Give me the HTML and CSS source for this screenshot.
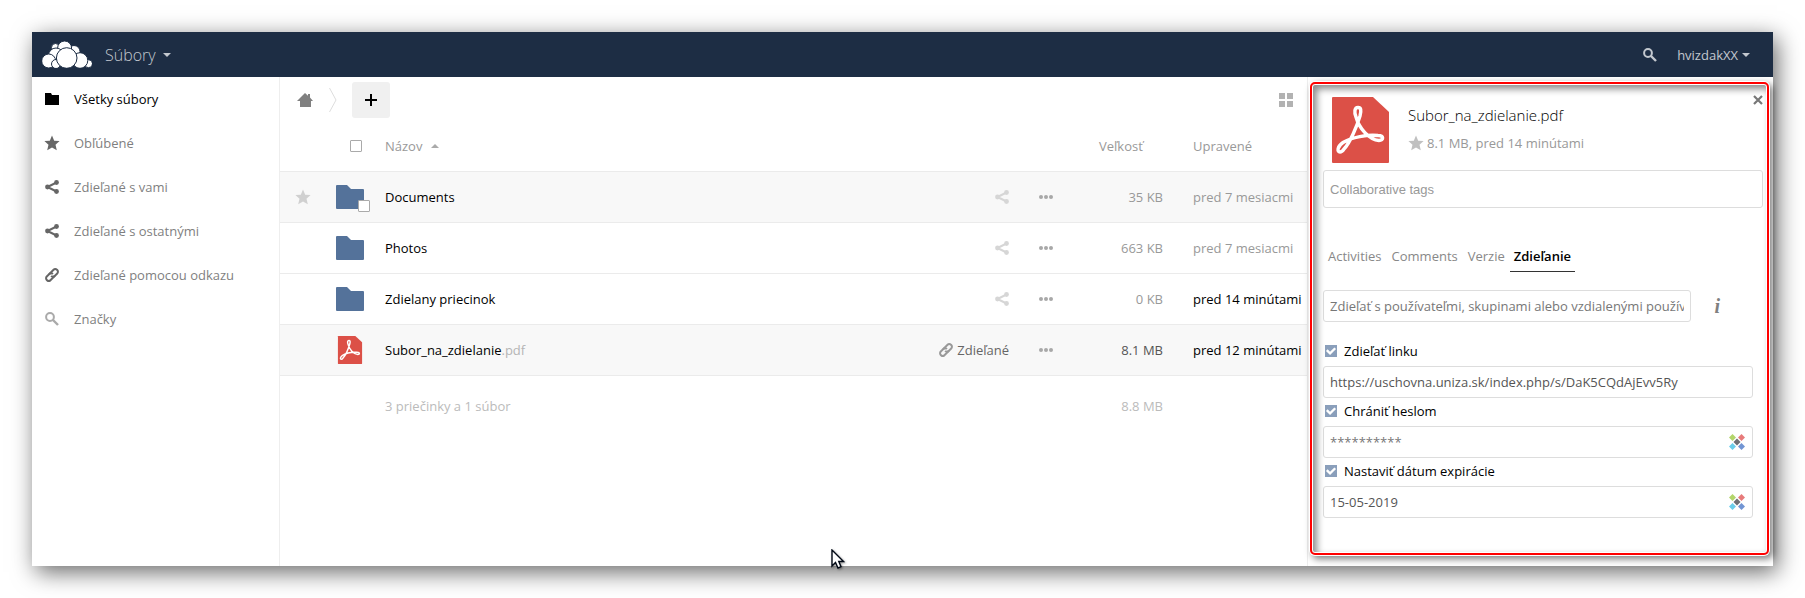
FILE: index.html
```
<!DOCTYPE html>
<html lang="sk">
<head>
  <meta charset="UTF-8" />
  <meta name="viewport" content="width=device-width, initial-scale=1.0" />
  <title>Súbory</title>
  <link rel="stylesheet" href="styles.css">
</head>
<body>
  <svg class="sprite" aria-hidden="true">
    <symbol id="i-folder" viewBox="0 0 14 12"><path d="M0 0h6l1 2h7v10H0z"/></symbol>
    <symbol id="i-star" viewBox="0 0 16 16"><path d="M8 .5l2.2 5.2 5.4.4-4.1 3.6 1.3 5.6L8 12.4l-4.8 2.9 1.3-5.6L.4 6.1l5.4-.4z"/></symbol>
    <symbol id="i-share" viewBox="0 0 14 14"><path d="M2.5 7l9-4.5M2.5 7l9 4.5" stroke="currentColor" stroke-width="2"/><circle cx="2.5" cy="7" r="2.4"/><circle cx="11.5" cy="2.5" r="2.4"/><circle cx="11.5" cy="11.5" r="2.4"/></symbol>
    <symbol id="i-link" viewBox="0 0 14 14"><g fill="none" stroke="currentColor" stroke-width="2" transform="rotate(-45 7 7)"><path d="M8.5 9.6H2.2a2.4 2.4 0 0 1-2.4-2.4v-.4a2.4 2.4 0 0 1 2.4-2.4h3.6a2.4 2.4 0 0 1 2.4 2.6"/><path d="M5.5 4.4h6.3a2.4 2.4 0 0 1 2.4 2.4v.4a2.4 2.4 0 0 1-2.4 2.4H8.2a2.4 2.4 0 0 1-2.4-2.6"/></g></symbol>
    <symbol id="i-search" viewBox="0 0 14 14"><circle cx="5" cy="5" r="3.9" fill="none" stroke="currentColor" stroke-width="2"/><path d="M8 8l5 5" stroke="currentColor" stroke-width="2.4"/></symbol>
    <symbol id="i-more" viewBox="0 0 14 4"><circle cx="2" cy="2" r="2"/><circle cx="7" cy="2" r="2"/><circle cx="12" cy="2" r="2"/></symbol>
    <symbol id="i-dir" viewBox="0 0 28 24"><path d="M1 0h10l4 4h12a1 1 0 0 1 1 1v18a1 1 0 0 1-1 1H1a1 1 0 0 1-1-1V1a1 1 0 0 1 1-1z"/></symbol>
    <symbol id="i-pdf" viewBox="0 0 57 66"><path d="M1 0h40l16 15v50a1 1 0 0 1-1 1H1a1 1 0 0 1-1-1V1a1 1 0 0 1 1-1z" fill="#dc5047"/><path d="M12 52C18 46 25 29 28 19C29.500 13 29 10.500 26 10.500C22.500 10.500 22 15 24 20C27 31 37 43 47 43.500C52 43.500 52 38.500 46 38.500C35 37.500 20 40 11 45.500C5 49.500 5 55 8 55C9.500 55 11 53.500 12 52Z" fill="none" stroke="#fff" stroke-width="3.400"/></symbol>
    <symbol id="i-xmenu" viewBox="0 0 16 16"><path fill="#b3d56b" d="M3.500 0L7 3.500 3.500 7 0 3.500z"/><path fill="#e77b7b" d="M12.500 0L16 3.500 12.500 7 9 3.500z"/><path fill="#6ccdea" d="M3.500 9L7 12.500 3.500 16 0 12.500z"/><path fill="#7295d3" d="M12.500 9l3.500 3.500-3.500 3.500L9 12.500z"/><path fill="#6e6e73" d="M8 4.500L11.500 8 8 11.500 4.500 8z"/></symbol>
  </svg>

  <div class="window">
    <header class="header">
      <a href="#" class="logo" aria-label="ownCloud">
        <svg width="50" height="27" viewBox="0 0 50 27" stroke="#1d2d44" stroke-width="1">
          <circle cx="13.500" cy="6.500" r="4"/><circle cx="32" cy="10.500" r="6"/><circle cx="22.600" cy="7" r="7"/>
          <circle cx="46.500" cy="22.700" r="4"/><circle cx="38" cy="19.500" r="7.800"/><circle cx="14" cy="14.500" r="7.500"/>
          <circle cx="6.700" cy="20" r="7"/><circle cx="14" cy="23" r="4.500"/><circle cx="24.700" cy="17" r="10.300"/>
        </svg>
      </a>
      <button class="app-menu">Súbory <span class="caret"></span></button>
      <button class="search" aria-label="Hľadať"><svg width="14" height="14"><use href="#i-search"/></svg></button>
      <button class="user-menu">hvizdakXX <span class="caret"></span></button>
    </header>

    <div class="content">
      <nav class="nav">
        <a href="#" class="active"><svg width="14" height="12"><use href="#i-folder"/></svg>Všetky súbory</a>
        <a href="#"><svg width="16" height="16"><use href="#i-star"/></svg>Obľúbené</a>
        <a href="#"><svg width="14" height="14"><use href="#i-share"/></svg>Zdieľané s vami</a>
        <a href="#"><svg width="14" height="14"><use href="#i-share"/></svg>Zdieľané s ostatnými</a>
        <a href="#"><svg width="14" height="14"><use href="#i-link"/></svg>Zdieľané pomocou odkazu</a>
        <a href="#"><svg class="pale" width="14" height="14"><use href="#i-search"/></svg>Značky</a>
      </nav>

      <main class="files">
        <div class="toolbar">
          <a href="#" class="home" aria-label="Domov"><svg width="16" height="14" viewBox="0 0 16 14"><path d="M8 0l3 2.700V1h2v3.500L16 8h-2v6H3V8H0z"/></svg></a>
          <svg class="crumb" width="8" height="24" viewBox="0 0 8 24"><path d="M.5 0l6.500 12-6.500 12" fill="none" stroke="#ddd"/></svg>
          <button class="new" aria-label="Nový"><svg width="12" height="12" viewBox="0 0 12 12"><path d="M5 0h2v5h5v2H7v5H5V7H0V5h5z"/></svg></button>
          <button class="grid-view" aria-label="Mriežka"><svg width="14" height="14" viewBox="0 0 14 14"><path d="M0 0h6v6H0zM8 0h6v6H8zM0 8h6v6H0zM8 8h6v6H8z"/></svg></button>
        </div>

        <table class="list">
          <thead>
            <tr>
              <th class="fav"></th>
              <th class="thumb"><input type="checkbox" class="check" aria-label="Vybrať všetko"></th>
              <th class="name"><button class="sort">Názov <span class="caret up"></span></button></th>
              <th class="size"><button class="sort">Veľkosť</button></th>
              <th class="date"><button class="sort">Upravené</button></th>
            </tr>
          </thead>
          <tbody>
            <tr class="hover">
              <td class="fav"><svg width="16" height="16"><use href="#i-star"/></svg></td>
              <td class="thumb"><span class="dir"><svg width="28" height="24"><use href="#i-dir"/></svg><input type="checkbox" class="check over" aria-label="Vybrať Documents"></span></td>
              <td class="name"><div class="row"><a href="#">Documents</a><button class="share" aria-label="Zdieľať"><svg width="14" height="14"><use href="#i-share"/></svg></button><button class="more" aria-label="Viac"><svg width="14" height="4"><use href="#i-more"/></svg></button></div></td>
              <td class="size">35 KB</td>
              <td class="date">pred 7 mesiacmi</td>
            </tr>
            <tr>
              <td class="fav"></td>
              <td class="thumb"><span class="dir"><svg width="28" height="24"><use href="#i-dir"/></svg></span></td>
              <td class="name"><div class="row"><a href="#">Photos</a><button class="share" aria-label="Zdieľať"><svg width="14" height="14"><use href="#i-share"/></svg></button><button class="more" aria-label="Viac"><svg width="14" height="4"><use href="#i-more"/></svg></button></div></td>
              <td class="size">663 KB</td>
              <td class="date">pred 7 mesiacmi</td>
            </tr>
            <tr>
              <td class="fav"></td>
              <td class="thumb"><span class="dir"><svg width="28" height="24"><use href="#i-dir"/></svg></span></td>
              <td class="name"><div class="row"><a href="#">Zdielany priecinok</a><button class="share" aria-label="Zdieľať"><svg width="14" height="14"><use href="#i-share"/></svg></button><button class="more" aria-label="Viac"><svg width="14" height="4"><use href="#i-more"/></svg></button></div></td>
              <td class="size">0 KB</td>
              <td class="date recent">pred 14 minútami</td>
            </tr>
            <tr class="hover">
              <td class="fav"></td>
              <td class="thumb"><span class="dir"><svg width="28" height="28"><use href="#i-pdf"/></svg></span></td>
              <td class="name"><div class="row"><a href="#">Subor_na_zdielanie<span class="ext">.pdf</span></a><button class="share shared"><svg width="14" height="14"><use href="#i-link"/></svg>Zdieľané</button><button class="more" aria-label="Viac"><svg width="14" height="4"><use href="#i-more"/></svg></button></div></td>
              <td class="size big">8.1 MB</td>
              <td class="date recent">pred 12 minútami</td>
            </tr>
          </tbody>
          <tfoot>
            <tr>
              <td></td>
              <td></td>
              <td class="name">3 priečinky a 1 súbor</td>
              <td class="size">8.8 MB</td>
              <td></td>
            </tr>
          </tfoot>
        </table>
      </main>

      <aside class="details">
        <button class="close" aria-label="Zavrieť"><svg width="10" height="10" viewBox="0 0 10 10"><path d="M1 1l8 8M9 1L1 9" stroke="currentColor" stroke-width="2.200"/></svg></button>
        <div class="info">
          <svg width="57" height="66"><use href="#i-pdf"/></svg>
          <div>
            <h3>Subor_na_zdielanie.pdf</h3>
            <p><svg width="16" height="16"><use href="#i-star"/></svg>8.1 MB, pred 14 minútami</p>
          </div>
        </div>
        <input type="text" class="tags" placeholder="Collaborative tags" aria-label="Collaborative tags">

        <div class="tabs">
          <a href="#">Activities</a>
          <a href="#">Comments</a>
          <a href="#">Verzie</a>
          <a href="#" class="selected">Zdieľanie</a>
        </div>

        <form class="sharing">
          <div class="share-with">
            <input type="text" class="field" placeholder="Zdieľať s používateľmi, skupinami alebo vzdialenými používateľmi..." aria-label="Zdieľať s používateľmi">
            <span class="hint">i</span>
          </div>
          <label class="option"><input type="checkbox" class="check" checked>Zdieľať linku</label>
          <div class="field-wrap">
            <input type="text" class="field" value="https://uschovna.uniza.sk/index.php/s/DaK5CQdAjEvv5Ry" aria-label="Odkaz" readonly>
          </div>
          <label class="option"><input type="checkbox" class="check" checked>Chrániť heslom</label>
          <div class="field-wrap">
            <input type="password" class="field" placeholder="**********" aria-label="Heslo">
            <svg class="xmenu" width="16" height="16"><use href="#i-xmenu"/></svg>
          </div>
          <label class="option"><input type="checkbox" class="check" checked>Nastaviť dátum expirácie</label>
          <div class="field-wrap">
            <input type="text" class="field" value="15-05-2019" aria-label="Dátum expirácie">
            <svg class="xmenu" width="16" height="16"><use href="#i-xmenu"/></svg>
          </div>
        </form>
        <div class="marker"></div>
      </aside>
    </div>

    <svg class="pointer" width="14" height="21" viewBox="0 0 14 21"><path d="M1 1v16l3.500-3.500L7 19l3-1.300L7.800 12.500H12.500z" fill="#fff" stroke="#000814" stroke-width="1.400"/></svg>
  </div>
</body>
</html>
```
FILE: styles.css
```
* {
  box-sizing: border-box;
  margin: 0;
  padding: 0;
}
body {
  padding: 32px;
  background: #fff;
  font-family: 'Open Sans', 'Noto Sans', sans-serif;
  font-size: 13px;
  line-height: 20px;
  color: #000;
}
a {
  color: inherit;
  text-decoration: none;
}
button {
  border: none;
  background: none;
  font: inherit;
  color: inherit;
  cursor: pointer;
}
svg {
  display: block;
  flex: none;
  fill: currentColor;
}
.sprite {
  position: absolute;
  width: 0;
  height: 0;
}
.window {
  position: relative;
  display: flex;
  flex-direction: column;
  min-height: calc(100vh - 64px);
  background: #fff;
  box-shadow: 4px 6px 22px rgba(0, 0, 0, 0.6);
}
.caret {
  border: 4px solid transparent;
  border-top-color: currentColor;
  border-bottom: none;
}
.caret.up {
  border-top: none;
  border-bottom: 4px solid #aaa;
}

/* header */
.header {
  display: flex;
  align-items: center;
  height: 45px;
  padding: 0 23px 0 10px;
  background: #1d2d44;
  color: #c3c8cf;
}
.logo {
  color: #fff;
}
.app-menu {
  display: flex;
  align-items: center;
  gap: 7px;
  margin-left: 13px;
  font-size: 16px;
  font-weight: 300;
}
.search {
  margin-left: auto;
  margin-right: 20px;
}
.user-menu {
  display: flex;
  align-items: center;
  gap: 4px;
}

.content {
  display: flex;
  flex: 1;
}

/* left navigation */
.nav {
  flex: none;
  width: 248px;
  border-right: 1px solid #eee;
}
.nav a {
  display: flex;
  align-items: center;
  height: 44px;
  padding-left: 42px;
  color: #7f7f7f;
}
.nav svg {
  margin-left: -30px;
  width: 16px;
  margin-right: 14px;
  color: #666;
}
.nav svg.pale {
  color: #aaa;
}
.nav .active,
.nav .active svg {
  color: #000;
}

/* file list */
.files {
  flex: 1;
  min-width: 0;
}
.toolbar {
  display: flex;
  align-items: center;
  height: 44px;
  padding: 1px 14px 0 17px;
}
.home {
  color: #808080;
}
.crumb {
  margin: 0 15px 0 16px;
}
.new {
  display: flex;
  align-items: center;
  justify-content: center;
  width: 38px;
  height: 36px;
  border-radius: 3px;
  background: #f0f0f0;
  color: #000;
}
.grid-view {
  margin-left: auto;
  color: #b2b2b2;
}
.list {
  width: 100%;
  border-collapse: collapse;
  table-layout: fixed;
}
.list th,
.list td {
  height: 51px;
  border-bottom: 1px solid #ebebeb;
  font-weight: 400;
  text-align: left;
  color: #999;
  white-space: nowrap;
}
.list th {
  height: 50px;
}
.list .fav {
  width: 46px;
  padding-left: 15px;
  color: #d0d0d0;
}
.list .thumb {
  width: 59px;
  padding-left: 10px;
}
.list th.thumb {
  padding-left: 24px;
}
.list .size {
  width: 124px;
  padding-right: 30px;
  text-align: right;
}
.list th.size {
  padding-left: 30px;
  text-align: left;
}
.list .date {
  width: 114px;
}
.list .recent {
  color: #000;
}
.list .big {
  color: #555;
}
.list .hover {
  background: #f8f8f8;
}
.sort {
  display: flex;
  align-items: center;
  gap: 9px;
}
.dir {
  position: relative;
  display: block;
  width: 28px;
  color: #54729a;
}
.row {
  display: flex;
  align-items: center;
  padding-right: 16px;
}
.row a {
  flex: 1;
  color: #000;
}
.ext {
  color: #b5b5b5;
}
.share {
  display: flex;
  align-items: center;
  gap: 4px;
  margin-right: 30px;
  color: #d6d6d6;
}
.shared {
  color: #666;
}
.shared svg {
  color: #999;
}
.more {
  color: #a8a8a8;
}
.list tfoot td {
  height: 61px;
  border: none;
  color: #bbb;
}

/* checkboxes */
.check {
  appearance: none;
  display: block;
  flex: none;
  width: 12px;
  height: 12px;
  border: 1px solid #aaa;
  border-radius: 1px;
  background: #fff;
}
.check:checked {
  display: grid;
  place-items: center;
  border: none;
  border-radius: 0;
  background: #8a9fbb;
}
.check:checked::after {
  content: '';
  width: 12px;
  height: 12px;
  background: #fff;
  clip-path: polygon(8% 50%, 22% 36%, 42% 56%, 78% 20%, 92% 34%, 42% 84%);
}
.check.over {
  position: absolute;
  right: -6px;
  bottom: -3px;
}

/* right panel */
.details {
  position: relative;
  flex: none;
  width: 466px;
  padding: 20px 10px 40px 15px;
  border-left: 1px solid #eee;
}
.close {
  position: absolute;
  top: 18px;
  right: 10px;
  color: #777;
}
.info {
  display: flex;
  gap: 19px;
  padding-left: 9px;
  margin-bottom: 7px;
}
.info h3 {
  margin: 8px 0;
  font-size: 15px;
  font-weight: 300;
}
.info p {
  display: flex;
  align-items: center;
  gap: 3px;
  color: #999;
}
.info p svg {
  color: #c0c0c0;
}
.tags {
  display: block;
  width: 100%;
  height: 38px;
  padding: 0 6px;
  border: 1px solid #ddd;
  border-radius: 3px;
  font: 13px 'Liberation Sans', Arial, sans-serif;
}
.tags::placeholder {
  color: #999;
}
.tabs {
  display: flex;
  margin: 38px 0 18px;
}
.tabs a {
  padding: 0 5px 5px;
  border-bottom: 1px solid transparent;
  color: #888;
}
.tabs .selected {
  padding: 0 4px 5px;
  border-color: #333;
  font-weight: 600;
  color: #000;
}
.sharing {
  padding-right: 10px;
}
.share-with {
  display: flex;
  align-items: center;
  margin-bottom: 19px;
  padding-right: 33px;
}
.share-with .field {
  flex: 1;
}
.hint {
  margin-left: 23px;
  font-family: 'Liberation Serif', serif;
  font-size: 20px;
  font-weight: 700;
  font-style: italic;
  color: #808080;
}
.option {
  display: flex;
  align-items: center;
  gap: 7px;
  height: 20px;
  padding-left: 2px;
  margin-bottom: 5px;
}
.field-wrap {
  position: relative;
  margin-bottom: 3px;
}
.field {
  display: block;
  width: 100%;
  height: 32px;
  padding: 0 6px;
  border: 1px solid #ddd;
  border-radius: 3px;
  background: #fff;
  font: inherit;
  color: #555;
}
.field::placeholder {
  color: #777;
}
.xmenu {
  position: absolute;
  top: 8px;
  right: 8px;
}

/* red frame laid over the panel */
.marker {
  position: absolute;
  top: 5px;
  right: 4px;
  bottom: 11px;
  left: 2px;
  border: 2px solid #f00;
  border-radius: 5px;
  box-shadow: 0 0 0 1px #fff, 3px 3px 7px 1px rgba(0, 0, 0, 0.5),
    inset 0 0 0 1px #fff, inset 4px 4px 7px 1px rgba(0, 0, 0, 0.45);
  pointer-events: none;
}
.pointer {
  position: absolute;
  left: 799px;
  bottom: -4px;
  filter: drop-shadow(1px 1px 1px rgba(0, 0, 0, 0.4));
}
```
